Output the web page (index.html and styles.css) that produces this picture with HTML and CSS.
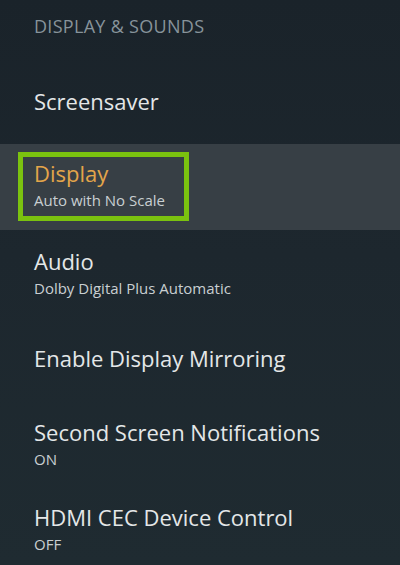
FILE: index.html
```html
<!DOCTYPE html>
<html lang="en">
<head>
<meta charset="utf-8">
<title>Display &amp; Sounds</title>
<link rel="stylesheet" href="styles.css">
</head>
<body>
<main class="panel">
  <header class="section-title">DISPLAY &amp; SOUNDS</header>
  <ul class="menu">
    <li class="item">
      <span class="label">Screensaver</span>
    </li>
    <li class="item item-active">
      <div class="focus-box">
        <span class="label label-active">Display</span>
        <span class="value">Auto with No Scale</span>
      </div>
    </li>
    <li class="item item-sub">
      <span class="label">Audio</span>
      <span class="value">Dolby Digital Plus Automatic</span>
    </li>
    <li class="item">
      <span class="label">Enable Display Mirroring</span>
    </li>
    <li class="item item-sub">
      <span class="label">Second Screen Notifications</span>
      <span class="value">ON</span>
    </li>
    <li class="item item-sub">
      <span class="label">HDMI CEC Device Control</span>
      <span class="value">OFF</span>
    </li>
  </ul>
</main>
</body>
</html>
```

FILE: styles.css
```css
html, body {
  margin: 0;
  padding: 0;
  height: 100%;
  overflow: hidden;
}

body {
  background: linear-gradient(180deg, #1a232a 0%, #1d272e 45%, #1f2b31 100%);
  font-family: "Open Sans", Lato, "Liberation Sans", sans-serif;
  color: #e4e7e8;
}

.panel {
  display: flex;
  flex-direction: column;
}

.section-title {
  height: 58.5px;
  box-sizing: border-box;
  padding: 14px 0 0 34px;
  font-size: 18px;
  line-height: 24px;
  letter-spacing: 0.3px;
  color: #87939a;
}

.menu {
  list-style: none;
  margin: 0;
  padding: 0;
  display: flex;
  flex-direction: column;
}

.item {
  height: 85.5px;
  box-sizing: border-box;
  padding: 0 0 0 34px;
  display: flex;
  flex-direction: column;
  justify-content: center;
}

.item-sub {
  justify-content: flex-start;
  padding-top: 18px;
}

.item-active {
  background: #373f45;
  padding: 8px 0 0 18px;
  justify-content: flex-start;
}

.focus-box {
  width: 171px;
  height: 69px;
  box-sizing: border-box;
  border: 5px solid #7bc20f;
  padding: 3px 0 0 11px;
  display: flex;
  flex-direction: column;
}

.label {
  font-size: 22px;
  line-height: 26px;
  color: #e4e7e8;
}

.label-active {
  color: #e3a54a;
}

.value {
  font-size: 15px;
  line-height: 20px;
  color: #c9cfd2;
  margin-top: 4px;
}
```
